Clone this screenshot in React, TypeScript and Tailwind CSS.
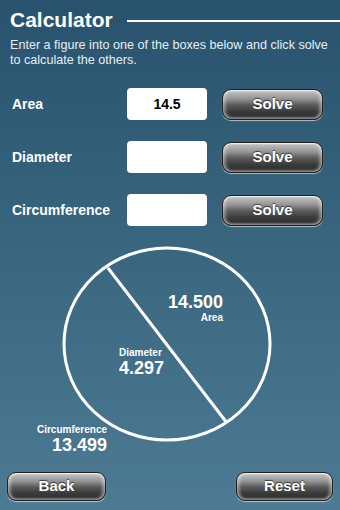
const font = { fontFamily: '"Liberation Sans", Arial, Helvetica, sans-serif' };

function GlossButton({ label, className = '' }: { label: string; className?: string }) {
  return (
    <button
      className={`rounded-[9px] border border-[#202020] bg-[linear-gradient(to_bottom,#c8c8c8_0%,#959595_30%,#5a5a5a_52%,#3a3a3a_75%,#2c2c2c_100%)] shadow-[0_1px_1px_rgba(255,255,255,0.6),inset_0_1px_1px_rgba(255,255,255,0.7),inset_3px_0_3px_rgba(255,255,255,0.35),inset_-3px_0_3px_rgba(255,255,255,0.35),inset_0_-2px_2px_rgba(255,255,255,0.25)] text-white font-bold text-[15px] [text-shadow:0_-1px_1px_rgba(0,0,0,0.6)] ${className}`}
    >
      {label}
    </button>
  );
}

const rows = [
  { label: 'Area', value: '14.5' },
  { label: 'Diameter', value: '' },
  { label: 'Circumference', value: '' },
];

export default function App() {
  return (
    <div
      className="w-[340px] h-[510px] overflow-hidden bg-gradient-to-b from-[#28526d] to-[#4d7b93] text-white flex flex-col"
      style={font}
    >
      <div className="flex items-center pt-[6px] pl-[10px]">
        <h1 className="text-[21px] font-bold leading-[28px]">Calculator</h1>
        <div className="flex-1 h-[2px] bg-white ml-[14px] mt-[2px]" />
      </div>
      <p className="pl-[10px] w-[338px] mt-[4px] text-[12.6px] leading-[15px] text-[#e6eef3]">
        Enter a figure into one of the boxes below and click solve to calculate the others.
      </p>

      <div className="flex flex-col gap-[21px] mt-[20px]">
        {rows.map((r) => (
          <div key={r.label} className="flex items-center h-[32px]">
            <span className="w-[127px] pl-[12px] text-[14px] font-bold">{r.label}</span>
            <div className="w-[80px] h-[32px] rounded-[4px] bg-white flex items-center justify-center text-black font-bold text-[14px]">
              {r.value}
            </div>
            <GlossButton label="Solve" className="ml-[15px] w-[101px] h-[31px]" />
          </div>
        ))}
      </div>

      <div className="relative h-[225px] mt-[12px]">
        <svg width="340" height="225" className="absolute inset-0">
          <ellipse cx="167" cy="106" rx="103" ry="96" fill="none" stroke="white" strokeWidth="3" />
          <line x1="108" y1="30" x2="227" y2="185" stroke="white" strokeWidth="3" />
        </svg>
        <div className="absolute right-[117px] top-[54px] flex flex-col items-end font-bold">
          <span className="text-[18px] leading-[20px]">14.500</span>
          <span className="text-[10px] leading-[11px]">Area</span>
        </div>
        <div className="absolute left-[119px] top-[109px] flex flex-col font-bold">
          <span className="text-[10px] leading-[11px]">Diameter</span>
          <span className="text-[18px] leading-[20px]">4.297</span>
        </div>
        <div className="absolute right-[233px] top-[186px] flex flex-col items-end font-bold">
          <span className="text-[10px] leading-[11px]">Circumference</span>
          <span className="text-[18px] leading-[20px]">13.499</span>
        </div>
      </div>

      <div className="flex justify-between px-[7px] mt-[9px]">
        <GlossButton label="Back" className="w-[99px] h-[29px]" />
        <GlossButton label="Reset" className="w-[97px] h-[29px]" />
      </div>
    </div>
  );
}
